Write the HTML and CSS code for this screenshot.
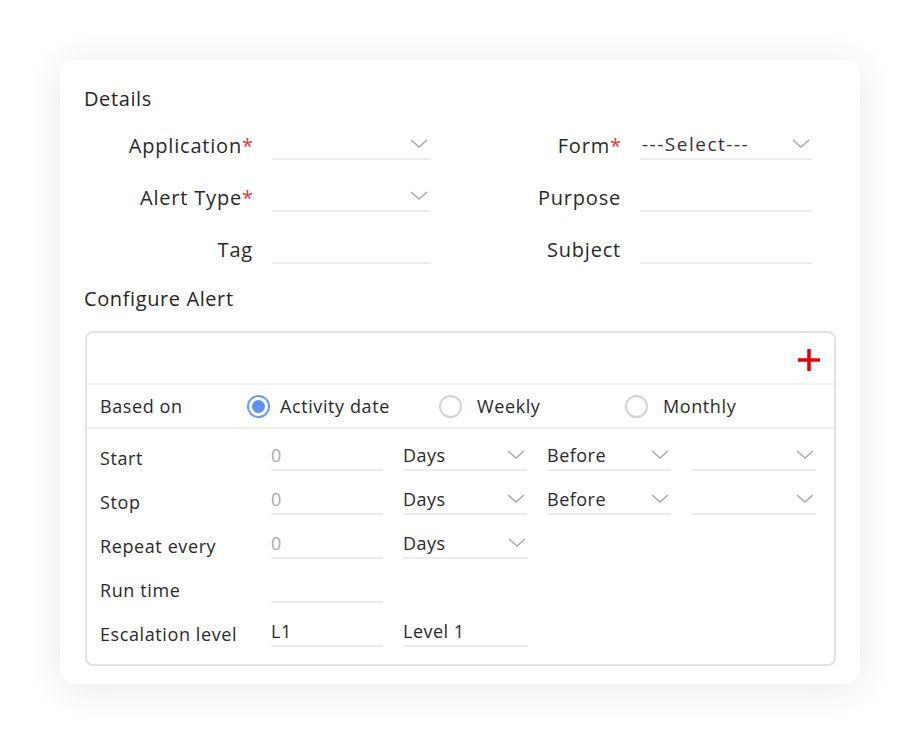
FILE: index.html
```html
<!DOCTYPE html>
<html lang="en">
<head>
  <meta charset="UTF-8">
  <meta name="viewport" content="width=device-width, initial-scale=1.0">
  <title>Alert Setup</title>
  <link rel="stylesheet" href="styles.css">
</head>
<body>
  <div class="card">
    <h2 class="section-title">Details</h2>

    <div class="details">
      <label class="lbl">Application<span class="req">*</span></label>
      <div class="field select"><span></span><svg class="chev" viewBox="0 0 18 10"><polyline points="1,1 9,8 17,1"/></svg></div>
      <label class="lbl">Form<span class="req">*</span></label>
      <div class="field select"><span class="val">---Select---</span><svg class="chev" viewBox="0 0 18 10"><polyline points="1,1 9,8 17,1"/></svg></div>

      <label class="lbl">Alert Type<span class="req">*</span></label>
      <div class="field select"><span></span><svg class="chev" viewBox="0 0 18 10"><polyline points="1,1 9,8 17,1"/></svg></div>
      <label class="lbl">Purpose</label>
      <div class="field"></div>

      <label class="lbl">Tag</label>
      <div class="field"></div>
      <label class="lbl">Subject</label>
      <div class="field"></div>
    </div>

    <h2 class="section-title config-title">Configure Alert</h2>

    <div class="config">
      <div class="config-top">
        <button class="add-btn" title="Add">
          <svg viewBox="0 0 24 24"><path d="M12 1v22M1 12h22"/></svg>
        </button>
      </div>

      <div class="based-on">
        <span class="row-label">Based on</span>
        <label class="radio checked"><span class="dot"></span>Activity date</label>
        <label class="radio"><span class="dot"></span>Weekly</label>
        <label class="radio"><span class="dot"></span>Monthly</label>
      </div>

      <div class="schedule">
        <div class="srow">
          <span class="row-label">Start</span>
          <div class="cell num"><span class="ph">0</span></div>
          <div class="cell sel"><span>Days</span><svg class="chev" viewBox="0 0 18 10"><polyline points="1,1 9,8 17,1"/></svg></div>
          <div class="cell sel"><span>Before</span><svg class="chev" viewBox="0 0 18 10"><polyline points="1,1 9,8 17,1"/></svg></div>
          <div class="cell sel"><span></span><svg class="chev" viewBox="0 0 18 10"><polyline points="1,1 9,8 17,1"/></svg></div>
        </div>
        <div class="srow">
          <span class="row-label">Stop</span>
          <div class="cell num"><span class="ph">0</span></div>
          <div class="cell sel"><span>Days</span><svg class="chev" viewBox="0 0 18 10"><polyline points="1,1 9,8 17,1"/></svg></div>
          <div class="cell sel"><span>Before</span><svg class="chev" viewBox="0 0 18 10"><polyline points="1,1 9,8 17,1"/></svg></div>
          <div class="cell sel"><span></span><svg class="chev" viewBox="0 0 18 10"><polyline points="1,1 9,8 17,1"/></svg></div>
        </div>
        <div class="srow">
          <span class="row-label">Repeat every</span>
          <div class="cell num"><span class="ph">0</span></div>
          <div class="cell sel"><span>Days</span><svg class="chev" viewBox="0 0 18 10"><polyline points="1,1 9,8 17,1"/></svg></div>
        </div>
        <div class="srow">
          <span class="row-label">Run time</span>
          <div class="cell num"></div>
        </div>
        <div class="srow">
          <span class="row-label">Escalation level</span>
          <div class="cell num"><span>L1</span></div>
          <div class="cell sel"><span>Level 1</span></div>
        </div>
      </div>
    </div>
  </div>
</body>
</html>
```

FILE: styles.css
```css
body {
  margin: 0;
  padding: 60px;
  background: #ffffff;
  font-family: "Open Sans", "Noto Sans", sans-serif;
  color: #2a2a2a;
}

.card {
  width: 800px;
  height: 624px;
  box-sizing: border-box;
  padding: 26px 24px 0 24px;
  background: #fff;
  border-radius: 14px;
  box-shadow: 0 4px 40px rgba(0, 0, 0, 0.09);
}

.section-title {
  margin: 0;
  font-size: 20px;
  font-weight: 500;
  line-height: 26px;
  letter-spacing: 0.6px;
  color: #262626;
}

/* details: label / field pairs, two per row */
.details {
  display: grid;
  grid-template-columns: 169px 158px 172px 172px;
  grid-auto-rows: 52px;
  column-gap: 19px;
  margin-top: 7px;
  align-items: center;
}

.lbl {
  text-align: right;
  font-size: 20px;
  letter-spacing: 0.8px;
  color: #2a2a2a;
}

.req {
  color: #e53935;
  letter-spacing: 0;
}

.field {
  height: 30px;
  border-bottom: 2px solid #ebebeb;
  display: flex;
  align-items: center;
  justify-content: space-between;
  font-size: 18px;
  padding-left: 2px;
  box-sizing: border-box;
}

.field .val {
  color: #333;
  font-size: 19px;
  letter-spacing: 1.5px;
}

.chev {
  width: 18px;
  height: 10px;
  fill: none;
  stroke: #a8a8a8;
  stroke-width: 1.4;
  flex-shrink: 0;
  margin-right: 2px;
}

.config-title {
  margin-top: 11px;
}

/* configure alert box */
.config {
  margin-top: 19px;
  margin-left: 1px;
  width: 751px;
  height: 335px;
  box-sizing: border-box;
  border: 2px solid #e2e2e2;
  border-radius: 8px;
}

.config-top {
  height: 50px;
  display: flex;
  justify-content: flex-end;
  align-items: center;
  padding-right: 13px;
  border-bottom: 2px solid #f0f0f0;
}

.add-btn {
  border: none;
  background: none;
  padding: 0;
  cursor: pointer;
  width: 24px;
  height: 24px;
  margin-top: 4px;
}

.add-btn svg {
  width: 24px;
  height: 24px;
  fill: none;
  stroke: #e60000;
  stroke-width: 3.5;
}

.based-on {
  height: 42px;
  display: flex;
  align-items: center;
  padding-left: 13px;
  border-bottom: 2px solid #f0f0f0;
}

.row-label {
  width: 147px;
  font-size: 18px;
  letter-spacing: 0.6px;
  color: #2a2a2a;
  flex-shrink: 0;
}

.radio {
  display: flex;
  align-items: center;
  gap: 15px;
  width: 192px;
  font-size: 18px;
  letter-spacing: 0.6px;
  cursor: pointer;
}

.radio.checked {
  gap: 10px;
}

.radio:nth-of-type(2) {
  width: 186px;
}

.dot {
  width: 23px;
  height: 23px;
  box-sizing: border-box;
  border-radius: 50%;
  border: 2px solid #d4d4d4;
  display: flex;
  align-items: center;
  justify-content: center;
}

.radio.checked .dot {
  border-color: #6d9ef2;
}

.radio.checked .dot::after {
  content: "";
  width: 13px;
  height: 13px;
  border-radius: 50%;
  background: #5e93f0;
}

.schedule {
  padding: 6px 0 0 13px;
}

.srow {
  height: 44px;
  display: flex;
  align-items: center;
  gap: 20px;
}

.srow .row-label {
  width: 151px;
  margin-right: -20px;
  padding-top: 2px;
}

.cell {
  height: 30px;
  box-sizing: border-box;
  border-bottom: 2px solid #ececec;
  display: flex;
  align-items: center;
  justify-content: space-between;
  font-size: 18px;
  letter-spacing: 0.5px;
  margin-top: -2px;
}

.cell.num {
  width: 112px;
  margin-left: 20px;
}

.cell.sel {
  width: 124px;
}

.cell.sel:last-child {
  width: 125px;
}

.ph {
  color: #a9a9a9;
}
```
